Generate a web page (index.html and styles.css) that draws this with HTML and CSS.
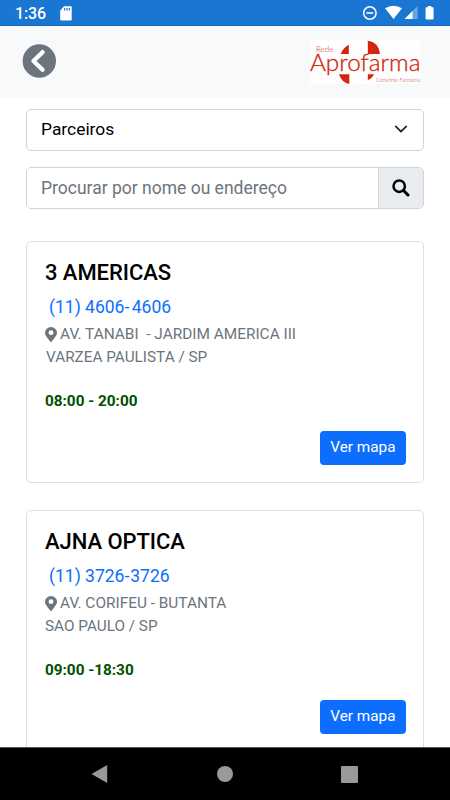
FILE: index.html
```html
<!DOCTYPE html>
<html lang="pt-BR">
<head>
  <meta charset="UTF-8">
  <meta name="viewport" content="width=device-width, initial-scale=1">
  <title>Rede Aprofarma</title>
  <link rel="stylesheet" href="styles.css">
</head>
<body>

<div class="status-bar">
  <span class="clock">1:36</span>
  <svg class="sd-icon" width="12" height="15" viewBox="0 0 12 15">
    <path fill="#fff" d="M4 .3h6.8q.9 0 .9.9v12.2q0 1-1 1H1.200q-1 0-1-1V4.500z"/>
    <path stroke="#1976d2" stroke-width="1.200" d="M4.700 2v2.500M7 2v2.500M9.300 2v2.500"/>
  </svg>
  <svg class="status-icons" width="74" height="16" viewBox="0 0 74 16">
    <circle cx="6.900" cy="8" r="6.200" fill="none" stroke="#fff" stroke-width="1.500"/>
    <path stroke="#fff" stroke-width="1.600" d="M3.500 8h6.800"/>
    <path fill="#fff" d="M22 3.300q8.500-5 17 0L30.500 14z"/>
    <path fill="#fff" fill-opacity=".35" d="M54.600 1v13H41.500z"/>
    <path fill="#fff" d="M49.500 6v8h-8z"/>
    <path fill="#fff" d="M63.300 2.200h1.500V1h3.600v1.200h1.500q.7 0 .7.700v10.700q0 .8-.8.800h-6.400q-.8 0-.8-.8V2.900q0-.7.700-.7z"/>
  </svg>
</div>

<header class="header">
  <a class="back" href="#">
    <svg width="34" height="34" viewBox="0 0 34 34">
      <circle cx="17.300" cy="17" r="16.700" fill="#6c757d"/>
      <path fill="none" stroke="#fff" stroke-width="4.400" stroke-linecap="round" stroke-linejoin="round" d="M20.500 8.200L11.500 17l9 8.800"/>
    </svg>
  </a>
  <svg class="logo" width="110" height="44" viewBox="0 0 110 44">
    <rect width="110" height="44" fill="#fefefe"/>
    <g fill="#d3250f">
      <path d="M30.700 14Q33 7.500 38.800 4.700V14z"/>
      <path d="M57.800.8Q68.500 2 70 14H57.800z"/>
      <path d="M29 34.300h10.300V44Q31.500 42.500 29 34.300z"/>
      <path d="M57.800 34.300h6.400Q62 38.500 57.800 40.200z"/>
      <text x="6" y="12.200" class="logo-small" textLength="17.300" lengthAdjust="spacingAndGlyphs">Rede</text>
      <text x="0" y="31.200" class="logo-name" textLength="110.500" lengthAdjust="spacingAndGlyphs">Aprofarma</text>
      <text x="66" y="41.500" class="logo-tag" textLength="44" lengthAdjust="spacingAndGlyphs">Convênio Farmácia</text>
    </g>
  </svg>
</header>

<main class="content">
  <div class="select">
    <span>Parceiros</span>
    <svg width="14" height="14" viewBox="0 0 16 16">
      <path fill="none" stroke="#212529" stroke-width="2" stroke-linecap="round" stroke-linejoin="round" d="M2 5l6 6 6-6"/>
    </svg>
  </div>

  <div class="search">
    <input type="text" class="search-input" placeholder="Procurar por nome ou endereço">
    <button class="search-button" aria-label="Procurar">
      <svg width="18" height="18" viewBox="0 0 18 18">
        <circle cx="7.200" cy="7.200" r="5.700" fill="none" stroke="#000" stroke-width="2.500"/>
        <path stroke="#000" stroke-width="3" stroke-linecap="round" d="M11.800 11.800l4.200 4.200"/>
      </svg>
    </button>
  </div>

  <section class="card">
    <h2 class="card-title">3 AMERICAS</h2>
    <a class="phone" href="tel:1146064606">(11) 4606-<span class="phone-end">4606</span></a>
    <p class="address">
      <svg class="pin" width="12" height="15" viewBox="0 0 384 512" preserveAspectRatio="none"><path fill="#6c757d" d="M172 502C27 291 0 270 0 192a192 192 0 0 1 384 0c0 78-27 99-172 310a24 24 0 0 1-40 0zM192 272a80 80 0 1 0 0-160 80 80 0 0 0 0 160z"/></svg><span class="street">AV. TANABI&nbsp; - JARDIM AMERICA III</span>
    </p>
    <p class="city city-varzea">VARZEA PAULISTA / SP</p>
    <p class="hours">08:00 - 20:00</p>
    <a class="map-button" href="#">Ver mapa</a>
  </section>

  <section class="card">
    <h2 class="card-title">AJNA OPTICA</h2>
    <a class="phone" href="tel:1137263726">(11) 3726-<span class="phone-end phone-end-tight">3726</span></a>
    <p class="address">
      <svg class="pin" width="12" height="15" viewBox="0 0 384 512" preserveAspectRatio="none"><path fill="#6c757d" d="M172 502C27 291 0 270 0 192a192 192 0 0 1 384 0c0 78-27 99-172 310a24 24 0 0 1-40 0zM192 272a80 80 0 1 0 0-160 80 80 0 0 0 0 160z"/></svg><span class="street">AV. CORIFEU - BUTANTA</span>
    </p>
    <p class="city">SAO PAULO / SP</p>
    <p class="hours">09:00 -18:30</p>
    <a class="map-button" href="#">Ver mapa</a>
  </section>
</main>

<nav class="nav-bar">
  <svg width="18" height="18" viewBox="0 0 18 18"><path fill="#999" d="M16.200 0v18L.5 9z"/></svg>
  <svg width="16" height="16" viewBox="0 0 16 16"><circle cx="8" cy="8" r="8" fill="#999"/></svg>
  <svg width="17" height="17" viewBox="0 0 17 17"><rect width="17" height="17" rx="1" fill="#999"/></svg>
</nav>

</body>
</html>
```
FILE: styles.css
```css
* {
  box-sizing: border-box;
}

body {
  margin: 0;
  height: 100vh;
  display: flex;
  flex-direction: column;
  overflow: hidden;
  background: #fff;
  color: #000;
  font-family: Roboto, sans-serif;
}

svg {
  display: block;
  flex: none;
}

h2, p {
  margin: 0;
}

a {
  text-decoration: none;
}

.status-bar {
  flex: none;
  height: 26px;
  padding: 0 13px 0 15px;
  display: flex;
  align-items: center;
  background: #1976d2;
  border-bottom: 1px solid #1669bd;
  color: #fff;
}

.clock {
  font-size: 16px;
  font-weight: 500;
  line-height: 20px;
  letter-spacing: -0.1px;
  margin-top: 3px;
  width: 45px;
}

.sd-icon {
  margin-top: 1px;
}

.status-icons {
  margin-left: auto;
  margin-top: 1px;
}

.header {
  flex: none;
  height: 72px;
  padding: 0 30px 0 22px;
  display: flex;
  align-items: center;
  justify-content: space-between;
  background: #f8f9fa;
}

.back {
  margin-top: -2px;
}

.logo-small, .logo-name, .logo-tag {
  font-family: Lato, sans-serif;
  font-weight: 300;
}

.logo-small {
  font-size: 7px;
}

.logo-name {
  font-size: 22.5px;
  stroke: #d3250f;
  stroke-width: 0.3px;
}

.logo-tag {
  font-size: 5.5px;
}

.content {
  flex: 1;
  min-height: 0;
  overflow: hidden;
  padding: 11px 26px 0;
}

.select {
  height: 42px;
  padding: 0 15px 2px 14px;
  display: flex;
  align-items: center;
  justify-content: space-between;
  border: 1px solid #ced4da;
  border-radius: 5px;
  font-size: 17.4px;
  line-height: 24px;
}

.search {
  height: 42px;
  margin: 16px 0 32px;
  display: flex;
  border: 1px solid #ced4da;
  border-radius: 5px;
  overflow: hidden;
}

.search-input {
  flex: 1;
  min-width: 0;
  padding: 0 14px 1px;
  border: 0;
  background: #fff;
  font-family: inherit;
  font-size: 17.5px;
}

.search-input::placeholder {
  color: #6c757d;
}

.search-button {
  width: 45px;
  padding: 0;
  display: flex;
  align-items: center;
  justify-content: center;
  border: 0;
  border-left: 1px solid #ced4da;
  background: #e9ecef;
}

.card {
  height: 242px;
  margin-bottom: 27px;
  padding: 17px 17.5px 17px 18px;
  display: flex;
  flex-direction: column;
  align-items: flex-start;
  border: 1px solid #dfdfdf;
  border-radius: 5px;
}

.card-title {
  font-size: 22px;
  font-weight: 500;
  line-height: 28px;
  letter-spacing: -0.05px;
}

.phone {
  margin: 8px 0 0 4px;
  color: #0d6efd;
  font-size: 17.5px;
  line-height: 24px;
}

.phone-end {
  margin-left: 2.5px;
}

.phone-end-tight {
  margin-left: 1px;
}

.address {
  display: flex;
  align-items: center;
  margin-top: 4px;
  gap: 3px;
}

.pin {
  margin-bottom: 1px;
}

.street, .city {
  color: #6c757d;
  font-size: 15.4px;
  line-height: 23px;
  white-space: nowrap;
}

.city {
  font-size: 15.3px;
}

.city-varzea {
  padding-left: 1px;
}

.hours {
  margin-top: 21px;
  color: #005000;
  font-size: 15.3px;
  font-weight: 700;
  line-height: 22px;
}

.map-button {
  height: 34px;
  margin-top: auto;
  padding: 0 10px;
  align-self: flex-end;
  border-radius: 4px;
  background: #0d6efd;
  color: #fff;
  font-size: 15.3px;
  line-height: 32px;
}

.nav-bar {
  flex: none;
  height: 53px;
  padding: 0 92px 0 91px;
  display: flex;
  align-items: center;
  justify-content: space-between;
  border-top: 1px solid #555;
  background: #000;
}
```
